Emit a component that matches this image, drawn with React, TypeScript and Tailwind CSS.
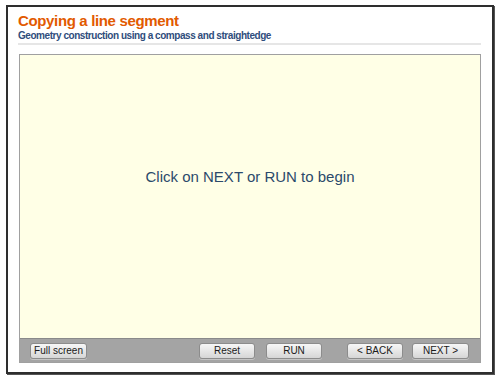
const font = { fontFamily: '"Liberation Sans", Arial, sans-serif' };

function ToolButton({ label, className = "" }: { label: string; className?: string }) {
  return (
    <button
      className={`h-[16px] w-[56px] rounded-[3px] border border-[#8c8c8c] bg-gradient-to-b from-[#f7f7f7] to-[#d6d6d6] text-[10px] leading-none text-[#1a1a1a] shadow-[0_1px_0_#c4c4c4] ${className}`}
    >
      {label}
    </button>
  );
}

export default function App() {
  return (
    <div className="w-[500px] h-[380px] bg-white pt-[5px] pl-[6px]" style={font}>
      <div className="w-[488px] h-[369px] border-2 border-[#2e2e2e] shadow-[1px_1px_0_#555] bg-white flex flex-col">
        {/* Header */}
        <div className="pl-[10px] pt-[5px] pr-[11px]">
          <h1 className="text-[15px] leading-[18px] font-bold text-[#e25a00] tracking-[-0.35px]">Copying a line segment</h1>
          <p className="text-[10px] leading-[12px] font-bold text-[#2f4d7c] tracking-[-0.45px]">
            Geometry construction using a compass and straightedge
          </p>
          <div className="mt-[1px] h-[2px] bg-[#e6e6e6]" />
        </div>

        {/* Stage */}
        <div className="ml-[11px] mt-[9px] w-[462px] h-[309px] border border-[#a0a0a0] flex flex-col">
          <div className="flex-1 bg-[#ffffe6] flex justify-center pt-[112px]">
            <span className="text-[15px] leading-[20px] text-[#2b4a6b]">Click on NEXT or RUN to begin</span>
          </div>
          <div className="h-[24px] bg-[#a4a4a4] border-t border-[#8a8a8a] flex items-center pl-[10px] pr-[11px]">
            <ToolButton label="Full screen" className="w-[57px]" />
            <div className="flex-1" />
            <ToolButton label="Reset" />
            <ToolButton label="RUN" className="ml-[11px]" />
            <ToolButton label="< BACK" className="ml-[25px]" />
            <ToolButton label="NEXT >" className="ml-[9px] w-[57px]" />
          </div>
        </div>
      </div>
    </div>
  );
}
